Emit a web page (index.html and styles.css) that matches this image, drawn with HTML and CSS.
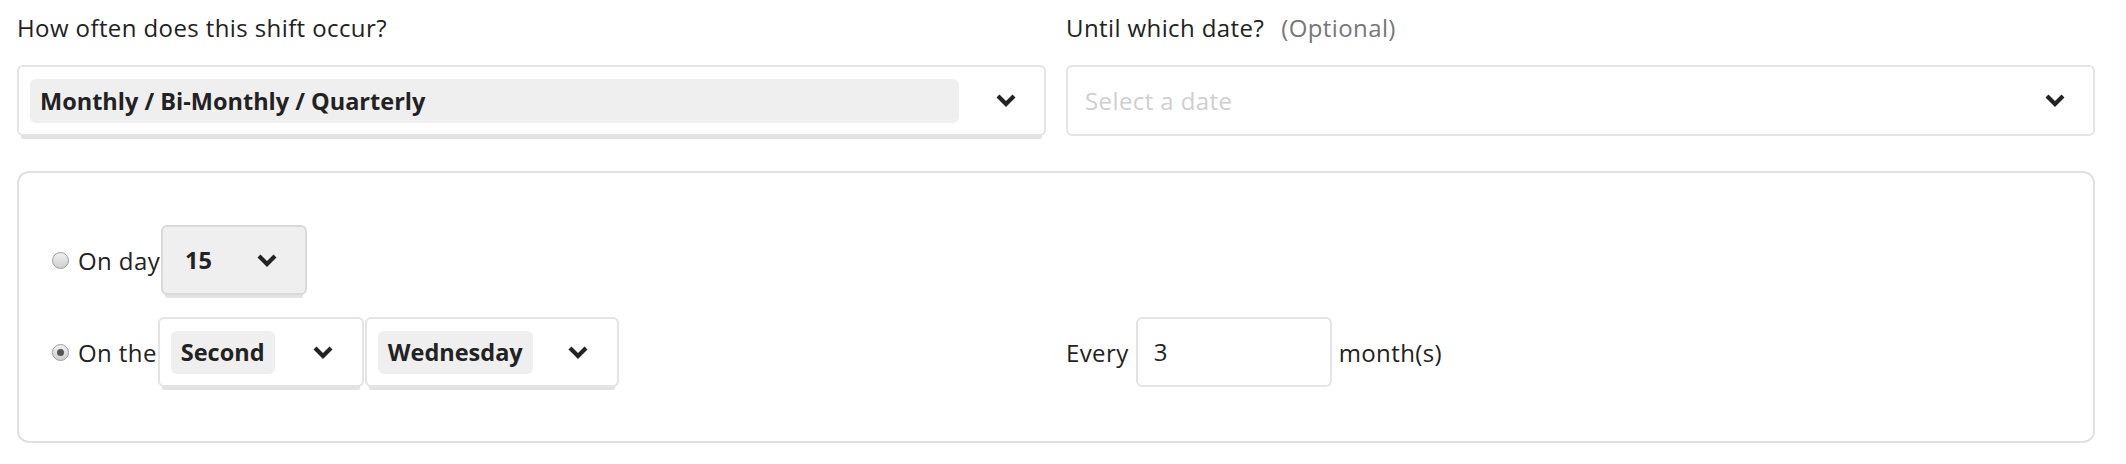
FILE: index.html
```html
<!DOCTYPE html>
<html lang="en">
<head>
<meta charset="utf-8">
<title>Shift recurrence</title>
<link rel="stylesheet" href="styles.css">
</head>
<body>
<div class="page">
  <div class="top-grid">
    <div class="field">
      <div class="label">How often does this shift occur?</div>
      <div class="select select-wide">
        <div class="chip">Monthly / Bi-Monthly / Quarterly</div>
        <span class="caret"><svg width="22" height="15" viewBox="0 0 22 15"><path d="M3 3 L11 11 L19 3" fill="none" stroke="#222" stroke-width="4.2"/></svg></span>
      </div>
    </div>
    <div class="field">
      <div class="label">Until which date?<span class="optional">(Optional)</span></div>
      <div class="select select-wide select-date">
        <div class="placeholder">Select a date</div>
        <span class="caret"><svg width="22" height="15" viewBox="0 0 22 15"><path d="M3 3 L11 11 L19 3" fill="none" stroke="#222" stroke-width="4.2"/></svg></span>
      </div>
    </div>
  </div>

  <div class="panel">
    <div class="row">
      <input type="radio" class="radio" name="mode">
      <span class="row-text">On day</span>
      <div class="select select-day">
        <div class="chip chip-plain">15</div>
        <span class="caret"><svg width="22" height="15" viewBox="0 0 22 15"><path d="M3 3 L11 11 L19 3" fill="none" stroke="#222" stroke-width="4.2"/></svg></span>
      </div>
    </div>
    <div class="row row-two">
      <input type="radio" class="radio" name="mode" checked>
      <span class="row-text">On the</span>
      <div class="select select-ordinal">
        <div class="chip">Second</div>
        <span class="caret"><svg width="22" height="15" viewBox="0 0 22 15"><path d="M3 3 L11 11 L19 3" fill="none" stroke="#222" stroke-width="4.2"/></svg></span>
      </div>
      <div class="select select-weekday">
        <div class="chip">Wednesday</div>
        <span class="caret"><svg width="22" height="15" viewBox="0 0 22 15"><path d="M3 3 L11 11 L19 3" fill="none" stroke="#222" stroke-width="4.2"/></svg></span>
      </div>
    </div>
    <div class="row row-every">
      <span class="row-text">Every</span>
      <div class="number-input">3</div>
      <span class="row-text">month(s)</span>
    </div>
  </div>
</div>
</body>
</html>
```

FILE: styles.css
```css
* { box-sizing: border-box; }

html, body {
  margin: 0;
  background: #ffffff;
}

body {
  font-family: "Open Sans", "Noto Sans", sans-serif;
  font-size: 24px;
  letter-spacing: 0.4px;
  color: #222222;
}

.page {
  padding: 12px 31px 0 17px;
}

.top-grid {
  display: grid;
  grid-template-columns: 1fr 1fr;
  column-gap: 20px;
}

.label {
  height: 32px;
  line-height: 32px;
  margin-bottom: 21px;
  white-space: nowrap;
}

.optional {
  color: #777777;
  margin-left: 17px;
}

.select {
  display: flex;
  align-items: center;
  border: 2px solid #e4e4e4;
  border-radius: 6px;
  background: #ffffff;
  box-shadow: 0 7px 0 -4px #e2e2e2;
}

.select-date {
  box-shadow: none;
}

.select-wide {
  height: 71px;
  padding: 0 0 0 11px;
}

.chip {
  background: #efefef;
  border-radius: 6px;
  height: 44px;
  line-height: 44px;
  padding: 0 10px;
  font-weight: 700;
  font-size: 23.5px;
  letter-spacing: 0;
  white-space: nowrap;
}

.select-wide .chip {
  flex: 1;
  margin-right: 9px;
}

.placeholder {
  flex: 1;
  color: #cfcfcf;
  padding-left: 6px;
}

.caret {
  width: 76px;
  flex: none;
  display: flex;
  align-items: center;
  justify-content: center;
}

.caret svg { display: block; }

.panel {
  margin-top: 35px;
  border: 2px solid #e0e0e0;
  border-radius: 12px;
  padding: 52px 16px 54px;
  display: grid;
  grid-template-columns: 1fr 1fr;
  grid-template-rows: 70px 70px;
  column-gap: 20px;
  row-gap: 22px;
}

.row {
  display: flex;
  align-items: center;
  gap: 1px;
  white-space: nowrap;
}

.row:first-child { padding-left: 17px; grid-column: 1; grid-row: 1; }
.row-two { padding-left: 17px; grid-column: 1; grid-row: 2; }
.row-every { grid-column: 2; grid-row: 2; gap: 7px; }

.radio {
  appearance: none;
  -webkit-appearance: none;
  margin: 0 8px 0 0;
  width: 17px;
  height: 17px;
  border-radius: 50%;
  border: 1px solid #9c9c9c;
  background: linear-gradient(#f0f0f0, #cfcfcf);
  position: relative;
  flex: none;
}

.radio:checked::after {
  content: "";
  position: absolute;
  left: 4px;
  top: 4px;
  width: 7px;
  height: 7px;
  border-radius: 50%;
  background: #555555;
}

.select-day {
  width: 146px;
  height: 70px;
  padding-left: 12px;
  background: #efefef;
  border-color: #d9d9d9;
}

.select-day .chip-plain {
  background: transparent;
  flex: 1;
  padding: 0 10px;
}

.select-ordinal {
  width: 206px;
  height: 70px;
  padding-left: 11px;
}

.select-weekday {
  width: 254px;
  height: 70px;
  padding-left: 11px;
}

.select-ordinal .chip,
.select-weekday .chip {
  height: 43px;
  line-height: 43px;
  margin-right: auto;
}

.select-ordinal .caret,
.select-weekday .caret {
  width: 78px;
}

.number-input {
  width: 196px;
  height: 70px;
  border: 2px solid #e4e4e4;
  border-radius: 6px;
  padding-left: 16px;
  line-height: 66px;
}
```
